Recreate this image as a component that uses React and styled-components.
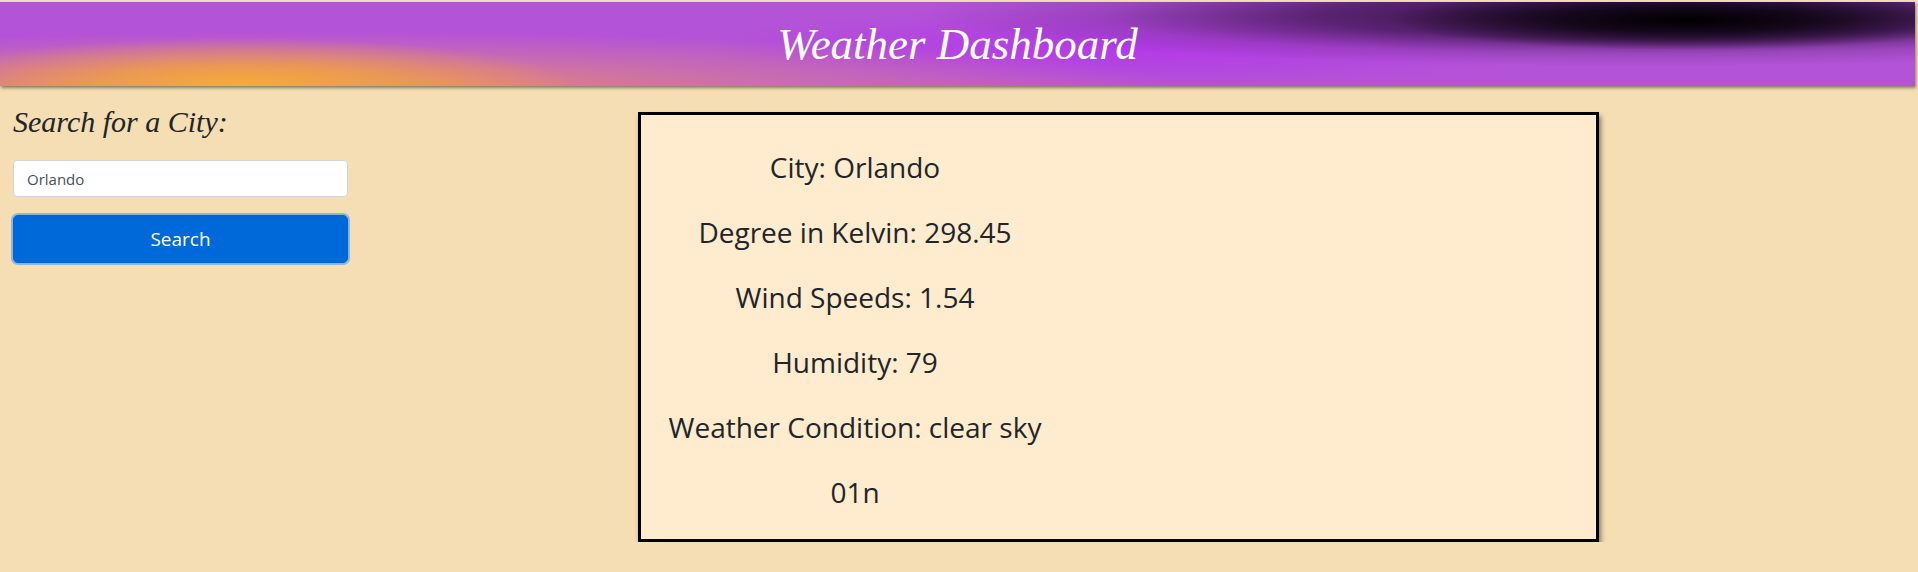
import React from "react"
import styled, { createGlobalStyle } from "styled-components"

const weather = [
  "City: Orlando",
  "Degree in Kelvin: 298.45",
  "Wind Speeds: 1.54",
  "Humidity: 79",
  "Weather Condition: clear sky",
  "01n",
]

const App = () => {
  return (
    <>
      <GlobalStyle />
      <Header>
        <HeaderTitle>Weather Dashboard</HeaderTitle>
      </Header>
      <Main>
        <Sidebar>
          <SearchLabel>Search for a City:</SearchLabel>
          <SearchInput type="text" defaultValue="Orlando" />
          <SearchButton type="button">Search</SearchButton>
        </Sidebar>
        <Card>
          <Details>
            {weather.map(line => (
              <DetailLine key={line}>{line}</DetailLine>
            ))}
          </Details>
        </Card>
      </Main>
    </>
  )
}

export default App

const GlobalStyle = createGlobalStyle`
  html, body {
    margin: 0;
    background-color: #f5deb3;
    font-family: "Open Sans", "Liberation Sans", sans-serif;
    color: #212529;
  }
  * {
    box-sizing: border-box;
  }
`

const Header = styled.header`
  height: 84px;
  margin: 2px 3px 0 0;
  display: flex;
  align-items: center;
  justify-content: center;
  box-shadow: 1px 2px 3px rgba(0, 0, 0, 0.45);
  background:
    radial-gradient(ellipse 300px 30px at 1690px 18px, #000 0%, rgba(15, 5, 20, 0.9) 40%, rgba(60, 20, 80, 0) 100%),
    radial-gradient(ellipse 720px 50px at 1640px 14px, rgba(30, 8, 40, 0.92) 0%, rgba(60, 20, 80, 0.75) 45%, rgba(110, 45, 140, 0.35) 75%, rgba(150, 70, 180, 0) 100%),
    radial-gradient(ellipse 340px 48px at 240px 84px, #f8ab35 0%, rgba(240, 160, 70, 0.85) 40%, rgba(220, 130, 130, 0) 100%),
    radial-gradient(ellipse 860px 58px at 330px 88px, rgba(235, 145, 100, 0.9) 0%, rgba(215, 125, 150, 0.6) 55%, rgba(190, 100, 190, 0) 100%),
    radial-gradient(ellipse 420px 40px at 1130px 45px, #b43ae9 0%, rgba(180, 60, 230, 0.6) 50%, rgba(180, 80, 215, 0) 100%),
    #b353d7;
`

const HeaderTitle = styled.h1`
  margin: 0;
  font-family: "Liberation Serif", "Times New Roman", serif;
  font-style: italic;
  font-weight: normal;
  font-size: 45px;
  color: #fff;
`

const Main = styled.main`
  display: flex;
  align-items: flex-start;
  padding: 0 13px;
`

const Sidebar = styled.aside`
  width: 335px;
  display: flex;
  flex-direction: column;
  padding-top: 18px;
`

const SearchLabel = styled.h3`
  margin: 0 0 20px;
  font-family: "Liberation Serif", "Times New Roman", serif;
  font-style: italic;
  font-weight: normal;
  font-size: 30px;
  line-height: 1.2;
  color: #212529;
`

const SearchInput = styled.input`
  height: 37px;
  width: 100%;
  padding: 0 13px;
  border: 1px solid #ced4da;
  border-radius: 4px;
  background: #fff;
  font-family: "Open Sans", sans-serif;
  font-size: 15px;
  color: #495057;
  outline: none;
`

const SearchButton = styled.button`
  margin-top: 18px;
  height: 48px;
  width: 100%;
  border: 1px solid #0062cc;
  border-radius: 5px;
  background: #0069d9;
  box-shadow: 0 0 0 2px rgba(38, 143, 255, 0.5);
  color: #fff;
  font-family: "Open Sans", sans-serif;
  font-size: 19px;
  cursor: pointer;
`

const Card = styled.section`
  margin: 26px 0 0 290px;
  width: 961px;
  height: 430px;
  border: 3px solid #000;
  background: #ffebcd;
  box-shadow: 2px 4px 5px rgba(0, 0, 0, 0.45);
  padding: 20px 0 0;
`

const Details = styled.div`
  width: 428px;
  display: flex;
  flex-direction: column;
  text-align: center;
`

const DetailLine = styled.p`
  margin: 0;
  height: 65px;
  line-height: 65px;
  font-size: 28px;
  color: #212529;
`
